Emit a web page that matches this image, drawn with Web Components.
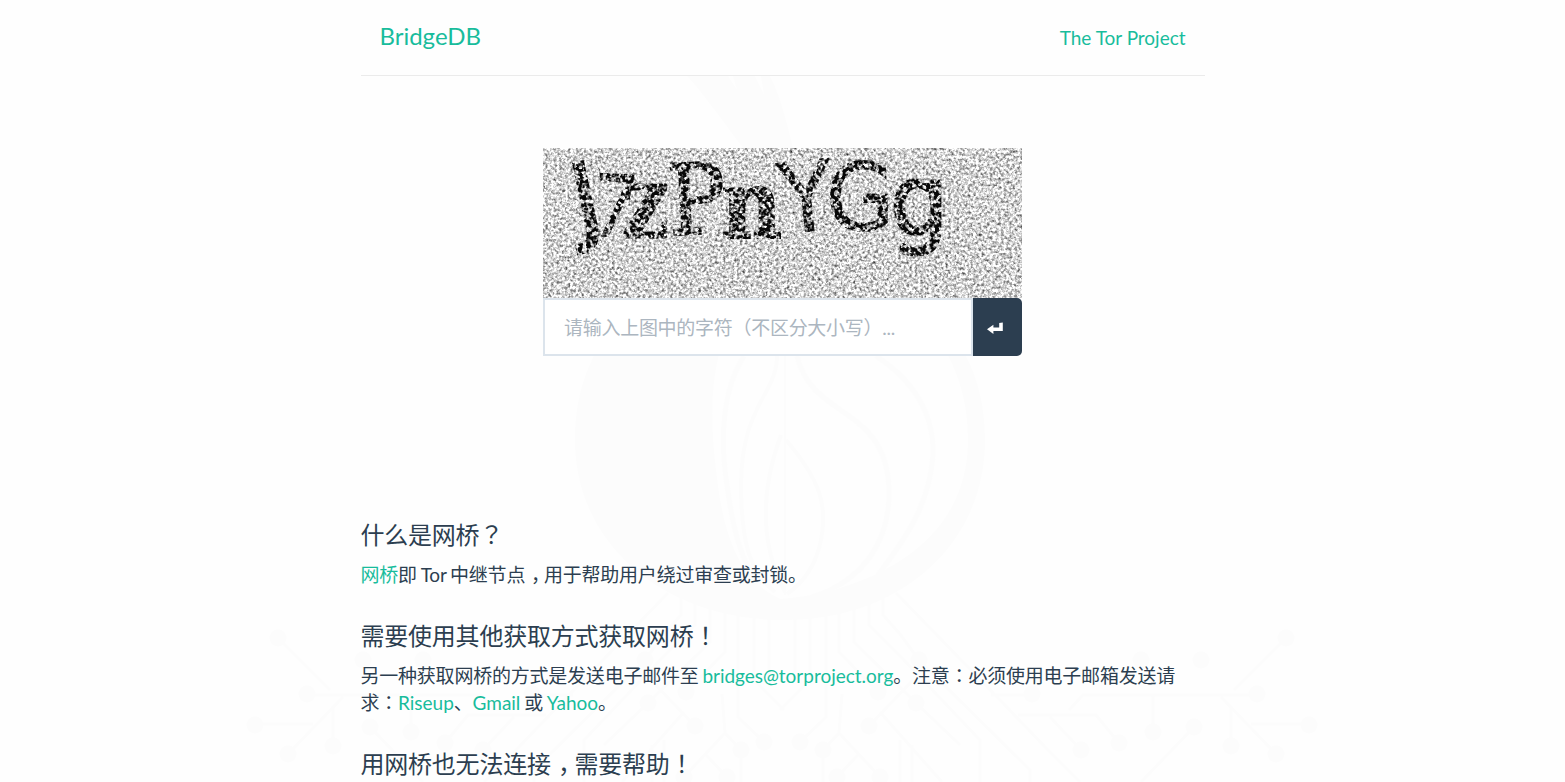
<!DOCTYPE html>
<html lang="zh-CN">
<head>
<meta charset="utf-8">
<title>BridgeDB</title>
<style>
html,body{margin:0;height:100%;overflow:hidden}
body{background:#fefefe;color:#2c3e50;font:19px/27.14px Lato,"Noto Sans CJK SC",sans-serif}
</style>
</head>
<body>
<bridge-page>
  <site-header slot="header">
    <site-link kind="brand">BridgeDB</site-link>
    <site-link kind="nav">The Tor Project</site-link>
  </site-header>
  <captcha-form slot="form"></captcha-form>
  <faq-item><span slot="title">什么是网桥<mid-mark lang="zh-TW">？</mid-mark></span><site-link kind="cjk">网桥</site-link>即 Tor 中继节点<mid-mark kind="comma">，</mid-mark>用于帮助用户绕过审查或封锁。</faq-item>
  <faq-item><span slot="title">需要使用其他获取方式获取网桥<mid-mark lang="zh-TW">！</mid-mark></span>另一种获取网桥的方式是发送电子邮件至 <site-link>bridges@torproject.org</site-link>。注意<mid-mark lang="zh-TW">：</mid-mark>必须使用电子邮箱发送请<br>求<mid-mark lang="zh-TW">：</mid-mark><site-link>Riseup</site-link>、<site-link>Gmail</site-link> 或 <site-link>Yahoo</site-link>。</faq-item>
  <faq-item><span slot="title">用网桥也无法连接<mid-mark kind="comma">，</mid-mark>需要帮助<mid-mark lang="zh-TW">！</mid-mark></span></faq-item>
</bridge-page>

<script>
function element(name, html) {
  customElements.define(name, class extends HTMLElement {
    constructor() {
      super();
      this.attachShadow({ mode: 'open' }).innerHTML = html.trim();
    }
  });
}

element('onion-backdrop', `
<style>:host{display:block;pointer-events:none}svg{display:block}</style>
<svg width="1565" height="782" viewBox="0 0 1565 782" fill="none" stroke="#fcfcfc" stroke-width="3">
  <g fill="#fcfcfc" stroke="none">
    <path d="M687 76H728L737 90L733 76H755L764 95L761 76H770C782 100 787 125 793 148C800 200 850 245 910 290C958 328 985 375 985 440C985 545 900 620 784 620C665 620 575 545 575 440C575 375 602 328 650 290C700 250 755 210 745 150C725 125 705 95 687 76Z"/>
    <path fill="#fefefe" d="M725 335C710 375 710 420 716 470C722 525 735 580 781 599C850 594 968 555 968 440C968 400 957 365 935 335Z"/>
  </g>
  <path stroke-width="5" d="M744 356C722 390 720 440 727 485C733 530 742 565 760 585"/>
  <path stroke-width="4" d="M777 356C777 395 740 405 741 490C742 540 748 570 775 592"/>
  <path stroke-width="5" d="M797 356C812 420 887 405 889 490C890 540 865 580 812 597"/>
  <path stroke-width="5" d="M876 356C920 385 934 420 933 455C929 510 900 545 878 575"/>
  <path stroke-width="4" d="M781 435C757 500 763 550 785 592M786 440C820 480 828 505 821 540C815 570 800 585 787 594"/>
  <path stroke-width="2" d="M785 356V595"/>
  <g id="r">
    <path d="M896 593L1000 700L1048 750L1080 782M1018 715H1096L1119 743M1050 717L1081 750M991 695H1032M1069 710L1083 695H1257M1153 695V732M1234 690L1286 638M1221 697L1276 754M1231 706V746M1251 724H1309M1194 727L1141 782M883 597V615L900 634L919 660M869 603V625L901 657L980 740V782M854 608V642L916 703L960 745M839 611V652L878 692M826 614V717L800 742M810 616V680L780 710M795 618V680M842 694L839 733L823 750M839 733L880 777M869 726L913 680M880 712L942 782M900 740V782M912 745V782M919 660L1030 770V782M858 755L837 777M823 750V782"/>
    <g fill="#fcfcfc" stroke="none"><circle cx="1286" cy="638" r="8.5"/><circle cx="1257" cy="694" r="8.5"/><circle cx="1309" cy="725" r="8.5"/><circle cx="1276" cy="754" r="8.5"/><circle cx="1231" cy="746" r="8.5"/><circle cx="1194" cy="727" r="8.5"/><circle cx="1153" cy="732" r="8.5"/><circle cx="1119" cy="743" r="8.5"/><circle cx="1081" cy="750" r="8.5"/><circle cx="1032" cy="694" r="8.5"/><circle cx="1141" cy="660" r="8.5"/><circle cx="1201" cy="660" r="8.5"/><circle cx="919" cy="660" r="8.5"/><circle cx="878" cy="692" r="8.5"/><circle cx="916" cy="703" r="8.5"/><circle cx="869" cy="726" r="8.5"/><circle cx="800" cy="742" r="8.5"/><circle cx="823" cy="750" r="8.5"/><circle cx="837" cy="777" r="8.5"/><circle cx="880" cy="777" r="8.5"/></g>
  </g>
  <use href="#r" transform="translate(1564 0) scale(-1 1)"/>
</svg>`);

element('bridge-page', `
<style>
:host{display:block;position:relative;height:782px;overflow:hidden}
onion-backdrop{position:absolute;inset:0}
main{position:relative;width:844px;margin:0 auto}
.form{display:flex;justify-content:center;margin-top:72px;margin-bottom:165px}
</style>
<onion-backdrop></onion-backdrop>
<main><slot name="header"></slot><div class="form"><slot name="form"></slot></div><slot></slot></main>`);

element('site-header', `
<style>:host{display:flex;box-sizing:border-box;height:76px;justify-content:space-between;align-items:flex-start;padding:22px 19px 0;background:#fefefe;border-bottom:1px solid #ebebeb}</style>
<slot></slot>`);

element('site-link', `
<style>
:host{color:#18bc9c;letter-spacing:-.02px}
:host([kind=brand]){font-size:24px}
:host([kind=nav]){padding-top:2px}
:host([kind=cjk]){letter-spacing:-.22px}
a{color:inherit;text-decoration:none}
</style><a><slot></slot></a>`);

element('mid-mark', `
<style>
:host{font-family:"Noto Sans CJK TC",sans-serif;line-height:0}
:host([kind=comma]){font-family:"Noto Sans CJK SC",sans-serif;font-feature-settings:"halt";padding:0 .2em 0 .3em}
</style><slot></slot>`);

element('faq-item', `
<style>
:host{display:block;margin-bottom:34px;letter-spacing:-.22px}
h2{margin:0 0 13px;font-size:24px;line-height:27px;font-weight:400}
p{margin:0;min-height:27px;white-space:nowrap;word-spacing:-.8px}
</style><h2><slot name="title"></slot></h2><p><slot></slot></p>`);

element('captcha-image', `
<style>
:host{display:block;width:479px;height:150px}
svg{display:block}
</style>
<svg width="479" height="150" viewBox="0 0 479 150">
  <filter id="grain" x="0" y="0" width="100%" height="100%" color-interpolation-filters="sRGB">
    <feTurbulence type="fractalNoise" baseFrequency=".36" numOctaves="3" seed="7"/>
    <feColorMatrix values="1.2 .7 0 0 -.12  1.2 .7 0 0 -.12  1.2 .7 0 0 -.12  0 0 0 0 1"/>
    <feGaussianBlur stdDeviation=".58" edgeMode="duplicate"/>
  </filter>
  <filter id="specks" x="0" y="0" width="479" height="150" filterUnits="userSpaceOnUse" color-interpolation-filters="sRGB">
    <feTurbulence type="fractalNoise" baseFrequency=".25" numOctaves="2" seed="12"/>
    <feColorMatrix values="0 0 0 0 .03  0 0 0 0 .03  0 0 0 0 .03  5 3 0 0 -3.4" result="n"/>
    <feComposite in="n" in2="SourceAlpha" operator="in"/>
    <feGaussianBlur stdDeviation=".6"/>
  </filter>
  <rect width="479" height="150" fill="#ccc" filter="url(#grain)"/>
  <g filter="url(#specks)" font-size="100" stroke="#000">
    <text transform="translate(36 86) rotate(-12) scale(.95 .96)" font-family="DejaVu Sans" stroke-width="3">J</text>
    <text transform="translate(50 88) rotate(3) scale(.7 .88)" font-family="Lato" stroke-width="1">7</text>
    <text transform="translate(78 90) scale(.85 1.03)" font-family="DejaVu Serif" font-weight="700" stroke-width="1">z</text>
    <text transform="translate(127 87) rotate(-3) scale(.85 .97)" font-family="DejaVu Serif" stroke-width="3">P</text>
    <text transform="translate(178 90) scale(.84 .96)" font-family="DejaVu Serif" font-weight="700" stroke-width="2">n</text>
    <text transform="translate(240 86) rotate(-6) scale(.88 .97)" font-family="DejaVu Sans" stroke-width="1">Y</text>
    <text transform="translate(283 82) scale(.88 .93)" font-family="DejaVu Sans" stroke-width="2">G</text>
    <text transform="translate(347 87) scale(.92 .98)" font-family="DejaVu Sans" stroke-width="3">g</text>
  </g>
</svg>`);

element('captcha-form', `
<style>
:host{display:block;width:479px}
.row{display:flex;height:58px}
input{flex:1;min-width:0;box-sizing:border-box;margin:0;border:2px solid #dce4ec;border-radius:0;background:#fff;padding:2px 18px 0 19px;font:inherit;color:#2c3e50;outline:0;letter-spacing:-.28px}
input::placeholder{color:#acb6c0;opacity:1}
button{display:grid;place-items:center;width:49px;border:0;padding:3px 5px 0 0;border-radius:0 5px 5px 0;background:#2c3e50}
</style>
<captcha-image></captcha-image>
<div class="row"><input type="text" placeholder="请输入上图中的字符（不区分大小写）..."><button aria-label="提交"><svg width="16" height="13" viewBox="0 0 16 13"><path fill="#fff" d="M12.2 1L15.8.4V9H6.4V12L0 7.2L6.4 2.8V5.6H12.2Z"/></svg></button></div>`);
</script>
</body>
</html>
